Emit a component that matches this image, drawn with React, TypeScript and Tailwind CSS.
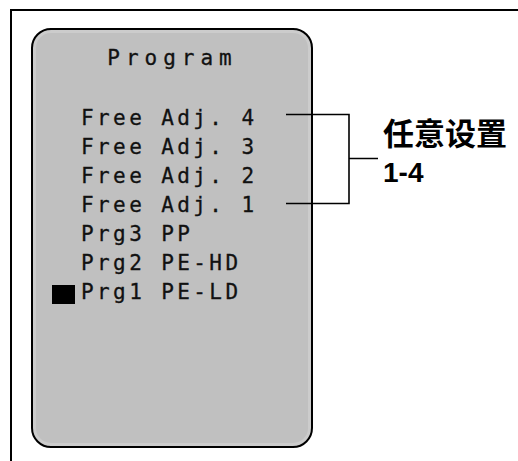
import React from 'react'

const rows = [
  { label: 'Free Adj. 4', active: false },
  { label: 'Free Adj. 3', active: false },
  { label: 'Free Adj. 2', active: false },
  { label: 'Free Adj. 1', active: false },
  { label: 'Prg3 PP', active: false },
  { label: 'Prg2 PE-HD', active: false },
  { label: 'Prg1 PE-LD', active: true },
]

const mono = { fontFamily: '"DejaVu Sans Mono", "Liberation Mono", monospace' }

function ProgramPanel() {
  return (
    <div
      className="w-[282px] h-[420px] shrink-0 rounded-[20px] border-2 border-black bg-[#c0c0c0] shadow-[inset_0_0_0_3px_#cccccc] pt-[14px] pl-[19px] text-[#111]"
      style={mono}
    >
      <div className="text-[21px] leading-[29px] tracking-[6px] text-center pr-[18px] [-webkit-text-stroke:0.3px_#111]">Program</div>
      <div className="mt-[31px] flex flex-col">
        {rows.map(row => (
          <div key={row.label} className="flex items-center h-[29px]">
            <div className="w-[29px] shrink-0 flex">
              {row.active && <div className="w-[23px] h-[19px] mt-[4px] bg-black" />}
            </div>
            <span className="text-[21px] leading-[29px] tracking-[3.4px] whitespace-pre [-webkit-text-stroke:0.3px_#111]">
              {row.label}
            </span>
          </div>
        ))}
      </div>
    </div>
  )
}

function Bracket() {
  return (
    <div className="flex -ml-[27px] mt-[85px]">
      <svg width="92" height="92" viewBox="0 0 92 92" className="shrink-0">
        <path d="M0 1.5 H63 V90.5 H0 M63 45.5 H92" fill="none" stroke="black" strokeWidth="1.6" />
      </svg>
      <div className="ml-[5px] mt-[3px] flex flex-col text-black">
        <span
          className="text-[31px] leading-[31px] font-bold whitespace-nowrap"
          style={{ fontFamily: '"Noto Sans CJK SC", "Noto Sans", sans-serif' }}
        >
          任意设置
        </span>
        <span
          className="mt-[12px] text-[28px] leading-[28px] font-bold"
          style={{ fontFamily: '"Liberation Sans", Arial, sans-serif' }}
        >
          1-4
        </span>
      </div>
    </div>
  )
}

export default function App() {
  return (
    <div className="w-[518px] h-[461px] overflow-hidden bg-white">
      <div className="ml-[10px] mt-[9px] w-[530px] h-[470px] border-l-2 border-t-2 border-black flex items-start">
        <div className="ml-[19px] mt-[17px] flex items-start">
          <ProgramPanel />
          <Bracket />
        </div>
      </div>
    </div>
  )
}
